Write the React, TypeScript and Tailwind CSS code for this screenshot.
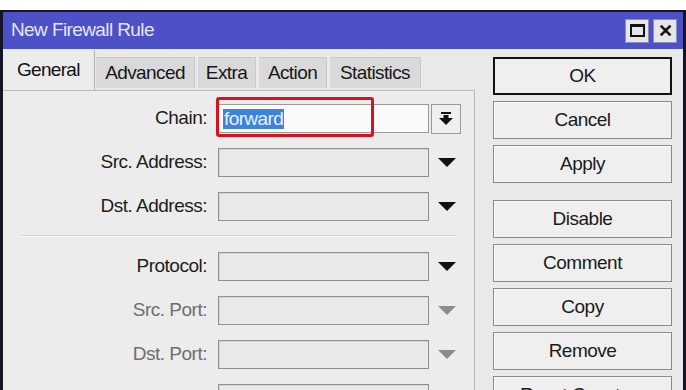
import React from "react";

const font = { fontFamily: '"Liberation Sans", Arial, sans-serif' };

const Arrow = ({ disabled }: { disabled?: boolean }) => (
  <svg width="18" height="10" viewBox="0 0 18 10">
    <polygon points="0,0 18,0 9,9" fill={disabled ? "#8c8c8c" : "#111"} />
  </svg>
);

const ChainIcon = () => (
  <svg width="14" height="14" viewBox="0 0 14 14">
    <rect x="2" y="0" width="10" height="2" fill="#111" />
    <rect x="4.5" y="3" width="5" height="3" fill="#111" />
    <polygon points="0,6 14,6 7,13" fill="#111" />
  </svg>
);

interface FieldRowProps {
  label?: string;
  disabled?: boolean;
}

const FieldRow = ({ label, disabled }: FieldRowProps) => (
  <div className="flex items-center h-[29px]">
    <div
      className={`w-[204px] text-right text-[19px] tracking-[-0.5px] ${
        disabled ? "text-[#6e6e6e]" : "text-[#1c1c1c]"
      }`}
    >
      {label ? `${label}:` : ""}
    </div>
    <div className="ml-[11px] w-[211px] h-[29px] border border-[#8f8f8f] bg-[#e9e9e9] shadow-[inset_1px_1px_0_#d6d6d6]" />
    <div className="w-[36px] flex justify-center">
      <Arrow disabled={disabled} />
    </div>
  </div>
);

const tabs = ["Advanced", "Extra", "Action", "Statistics"];
const tabWidths = ["w-[99px]", "w-[58px]", "w-[68px]", "w-[91px]"];

const buttons = [
  { label: "OK", primary: true },
  { label: "Cancel" },
  { label: "Apply", gapAfter: true },
  { label: "Disable" },
  { label: "Comment" },
  { label: "Copy" },
  { label: "Remove" },
  { label: "Reset Counters" },
];

export default function App() {
  return (
    <div className="w-[686px] h-[390px] bg-white pt-[10px] overflow-hidden" style={font}>
      <div className="h-[380px] border-x-[3px] border-t-[2px] border-[#15152a] flex flex-col">
        {/* Title bar */}
        <div className="h-[37px] bg-[#4e50c5] flex items-center justify-between pl-[8px] pr-[6px] shrink-0">
          <span className="text-[19px] text-[#e4e6fb] tracking-[-0.6px]">New Firewall Rule</span>
          <div className="flex gap-[4px]">
            <div className="w-[24px] h-[24px] bg-[#e6e6e6] border border-[#8a8ac8] flex items-center justify-center">
              <div className="w-[15px] h-[13px] border-[2px] border-[#111] border-t-[3px]" />
            </div>
            <div className="w-[24px] h-[24px] bg-[#e6e6e6] border border-[#8a8ac8] flex items-center justify-center text-[18px] font-bold text-[#111] leading-none">
              ✕
            </div>
          </div>
        </div>

        {/* Body */}
        <div className="flex-1 flex bg-[#e9e9e9]">
          <div className="w-[472px] flex flex-col">
            {/* Tabs */}
            <div className="h-[41px] flex items-end pt-[1px]">
              <div className="w-[92px] h-[40px] bg-[#ececec] border-r border-[#b4b4b4] flex items-center pl-[14px] text-[19px] text-[#111] tracking-[-0.7px]">
                General
              </div>
              <div className="flex gap-[3px] items-end pb-[2px] ml-[1px]">
                {tabs.map((t, i) => (
                  <div
                    key={t}
                    className={`${tabWidths[i]} h-[31px] bg-[#d9d9d9] border-t border-r border-[#c8c8c8] flex items-center justify-center text-[19px] text-[#161616] tracking-[-0.6px]`}
                  >
                    {t}
                  </div>
                ))}
              </div>
            </div>

            {/* Panel */}
            <div className="flex-1 bg-[#ececec] border-t border-r border-[#b9b9b9] pt-[13px] flex flex-col">
              <div className="flex flex-col gap-[15px]">
                <div className="flex items-center h-[29px]">
                  <div className="w-[204px] text-right text-[19px] text-[#1c1c1c] tracking-[-0.5px]">
                    Chain:
                  </div>
                  <div className="relative ml-[11px] w-[211px] h-[29px] border border-[#9a9a9a] bg-[#fafafa] flex items-center pl-[4px]">
                    <span className="bg-[#3d83dc] text-[#e8f1ff] text-[19px] leading-[20px] px-[1px] tracking-[-0.6px]">
                      forward
                    </span>
                    <div className="absolute left-[-3px] top-[-8px] w-[158px] h-[40px] border-[3px] border-[#d5121d] rounded-[3px]" />
                  </div>
                  <div className="ml-[2px] w-[30px] h-[30px] border border-[#9a9a9a] bg-[#efefef] flex items-center justify-center">
                    <ChainIcon />
                  </div>
                </div>
                <FieldRow label="Src. Address" />
                <FieldRow label="Dst. Address" />
              </div>

              <div className="mt-[14px] mx-[18px] h-[2px] bg-[#d3d3d3] border-b border-[#f7f7f7]" />

              <div className="mt-[15px] flex flex-col gap-[15px]">
                <FieldRow label="Protocol" />
                <FieldRow label="Src. Port" disabled />
                <FieldRow label="Dst. Port" disabled />
                <FieldRow disabled />
              </div>
            </div>
          </div>

          {/* Buttons */}
          <div className="flex-1 flex flex-col pl-[18px] pr-[11px] pt-[8px]">
            {buttons.map((b) => (
              <div
                key={b.label}
                className={`h-[38px] shrink-0 flex items-center justify-center text-[19px] text-[#1a1a1a] tracking-[-0.5px] bg-[#efefef] ${
                  b.primary
                    ? "border-[2px] border-[#111]"
                    : "border border-[#8a8a8a] shadow-[inset_1px_1px_0_#fafafa]"
                } ${b.gapAfter ? "mb-[17px]" : "mb-[6px]"}`}
              >
                {b.label}
              </div>
            ))}
          </div>
        </div>
      </div>
    </div>
  );
}
